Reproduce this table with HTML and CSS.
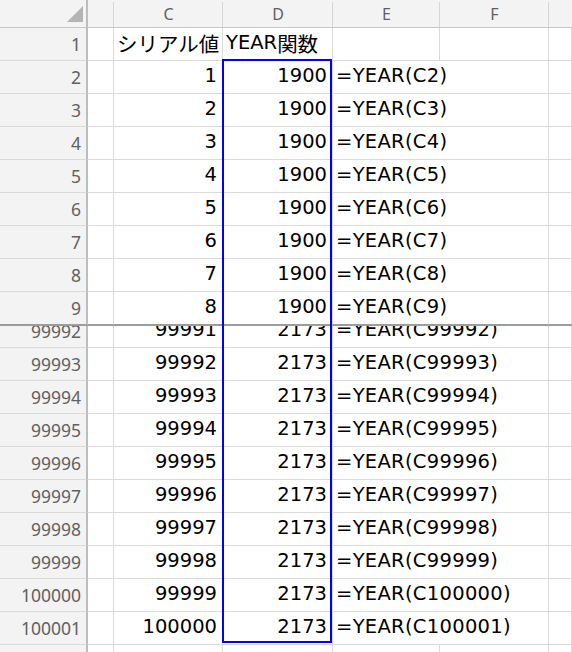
FILE: index.html
```html
<!DOCTYPE html>
<html lang="ja">
<head>
<meta charset="utf-8">
<title>YEAR関数</title>
<link rel="stylesheet" href="styles.css">
</head>
<body>
<div class="sheet">
  <div class="pane pane-top">
    <div class="row head-row">
      <div class="corner"><svg width="20" height="20" viewBox="0 0 20 20"><polygon points="3,19 19,19 19,3" fill="#b4b4b4"/></svg></div>
      <div class="colhead"></div>
      <div class="colhead">C</div>
      <div class="colhead">D</div>
      <div class="colhead">E</div>
      <div class="colhead">F</div>
      <div class="colhead last"></div>
    </div>
    <div class="row">
      <div class="rh">1</div><div class="c"></div>
      <div class="c txt"><span class="ja">シリアル値</span></div><div class="c txt">YEAR<span class="ja">関数</span></div>
      <div class="c"></div><div class="c"></div><div class="c"></div>
    </div>
    <div class="row"><div class="rh">2</div><div class="c"></div><div class="c num">1</div><div class="c num">1900</div><div class="c txt f">=YEAR(C2)</div><div class="c"></div></div>
    <div class="row"><div class="rh">3</div><div class="c"></div><div class="c num">2</div><div class="c num">1900</div><div class="c txt f">=YEAR(C3)</div><div class="c"></div></div>
    <div class="row"><div class="rh">4</div><div class="c"></div><div class="c num">3</div><div class="c num">1900</div><div class="c txt f">=YEAR(C4)</div><div class="c"></div></div>
    <div class="row"><div class="rh">5</div><div class="c"></div><div class="c num">4</div><div class="c num">1900</div><div class="c txt f">=YEAR(C5)</div><div class="c"></div></div>
    <div class="row"><div class="rh">6</div><div class="c"></div><div class="c num">5</div><div class="c num">1900</div><div class="c txt f">=YEAR(C6)</div><div class="c"></div></div>
    <div class="row"><div class="rh">7</div><div class="c"></div><div class="c num">6</div><div class="c num">1900</div><div class="c txt f">=YEAR(C7)</div><div class="c"></div></div>
    <div class="row"><div class="rh">8</div><div class="c"></div><div class="c num">7</div><div class="c num">1900</div><div class="c txt f">=YEAR(C8)</div><div class="c"></div></div>
    <div class="row"><div class="rh">9</div><div class="c"></div><div class="c num">8</div><div class="c num">1900</div><div class="c txt f">=YEAR(C9)</div><div class="c"></div></div>
  </div>
  <div class="pane pane-bottom">
    <div class="scroll">
      <div class="row"><div class="rh">99992</div><div class="c"></div><div class="c num">99991</div><div class="c num">2173</div><div class="c txt f">=YEAR(C99992)</div><div class="c"></div></div>
      <div class="row"><div class="rh">99993</div><div class="c"></div><div class="c num">99992</div><div class="c num">2173</div><div class="c txt f">=YEAR(C99993)</div><div class="c"></div></div>
      <div class="row"><div class="rh">99994</div><div class="c"></div><div class="c num">99993</div><div class="c num">2173</div><div class="c txt f">=YEAR(C99994)</div><div class="c"></div></div>
      <div class="row"><div class="rh">99995</div><div class="c"></div><div class="c num">99994</div><div class="c num">2173</div><div class="c txt f">=YEAR(C99995)</div><div class="c"></div></div>
      <div class="row"><div class="rh">99996</div><div class="c"></div><div class="c num">99995</div><div class="c num">2173</div><div class="c txt f">=YEAR(C99996)</div><div class="c"></div></div>
      <div class="row"><div class="rh">99997</div><div class="c"></div><div class="c num">99996</div><div class="c num">2173</div><div class="c txt f">=YEAR(C99997)</div><div class="c"></div></div>
      <div class="row"><div class="rh">99998</div><div class="c"></div><div class="c num">99997</div><div class="c num">2173</div><div class="c txt f">=YEAR(C99998)</div><div class="c"></div></div>
      <div class="row"><div class="rh">99999</div><div class="c"></div><div class="c num">99998</div><div class="c num">2173</div><div class="c txt f">=YEAR(C99999)</div><div class="c"></div></div>
      <div class="row"><div class="rh">100000</div><div class="c"></div><div class="c num">99999</div><div class="c num">2173</div><div class="c txt f">=YEAR(C100000)</div><div class="c"></div></div>
      <div class="row"><div class="rh">100001</div><div class="c"></div><div class="c num">100000</div><div class="c num">2173</div><div class="c txt f">=YEAR(C100001)</div><div class="c"></div></div>
      <div class="row"><div class="rh">100002</div><div class="c"></div><div class="c"></div><div class="c"></div><div class="c"></div><div class="c"></div><div class="c"></div></div>
    </div>
  </div>
  <div class="selection"></div>
</div>
</body>
</html>
```

FILE: styles.css
```css
* { box-sizing: border-box; }
html, body { margin: 0; padding: 0; background: #fff; }
.sheet {
  position: relative;
  width: 572px;
  height: 652px;
  overflow: hidden;
  font-family: "DejaVu Sans", "Noto Sans CJK JP", sans-serif;
  color: #000;
}
.row {
  display: grid;
  grid-template-columns: 88px 26px 109px 110px 107px 109px 1fr;
  height: 33px;
}
.head-row { height: 28px; }
.corner {
  background: #f3f3f3;
  border-right: 2px solid #bdbdbd;
  border-bottom: 1px solid #c6c6c6;
  display: flex;
  justify-content: flex-end;
  align-items: flex-end;
  padding: 0 2px 4px 0;
}
.corner svg { display: block; }
.colhead {
  background: linear-gradient(#d6d6d6, #d6d6d6) right 0 bottom 0 / 1px 25px no-repeat, #f3f3f3;
  border-bottom: 1px solid #c6c6c6;
  color: #5f5f5f;
  font-family: "Noto Sans", sans-serif;
  font-size: 16px;
  display: flex;
  justify-content: center;
  align-items: center;
  padding-top: 1px;
}
.colhead.last { background: #f3f3f3; }
.rh {
  background: #f3f3f3;
  border-right: 2px solid #bdbdbd;
  border-bottom: 1px solid #d9d9d9;
  color: #616161;
  font-family: "Noto Sans", sans-serif;
  font-size: 17.5px;
  display: flex;
  justify-content: flex-end;
  align-items: center;
  padding: 0 5px 1px 0;
}
.c {
  border-right: 1px solid #dadada;
  border-bottom: 1px solid #dadada;
  font-size: 19.5px;
  line-height: 22px;
  display: flex;
  align-items: center;
  white-space: nowrap;
  padding: 0 5px 2px 3px;
  min-width: 0;
}
.f { letter-spacing: 0.3px; }
.ja {
  font-family: "Noto Sans CJK JP", sans-serif;
  font-size: 20.5px;
  line-height: 22px;
}
.num { justify-content: flex-end; }
.txt { justify-content: flex-start; }
.f { grid-column: span 2; }
.pane-top .row:last-child > div { border-bottom-color: #9c9c9c; }
.pane-top { border-bottom: 1px solid #9c9c9c; }
.pane-bottom {
  height: 327px;
  overflow: hidden;
}
.scroll { margin-top: -11px; }
.selection {
  position: absolute;
  left: 222px;
  top: 59px;
  width: 110px;
  height: 584px;
  border: 2px solid #0000ff;
  pointer-events: none;
}
```
